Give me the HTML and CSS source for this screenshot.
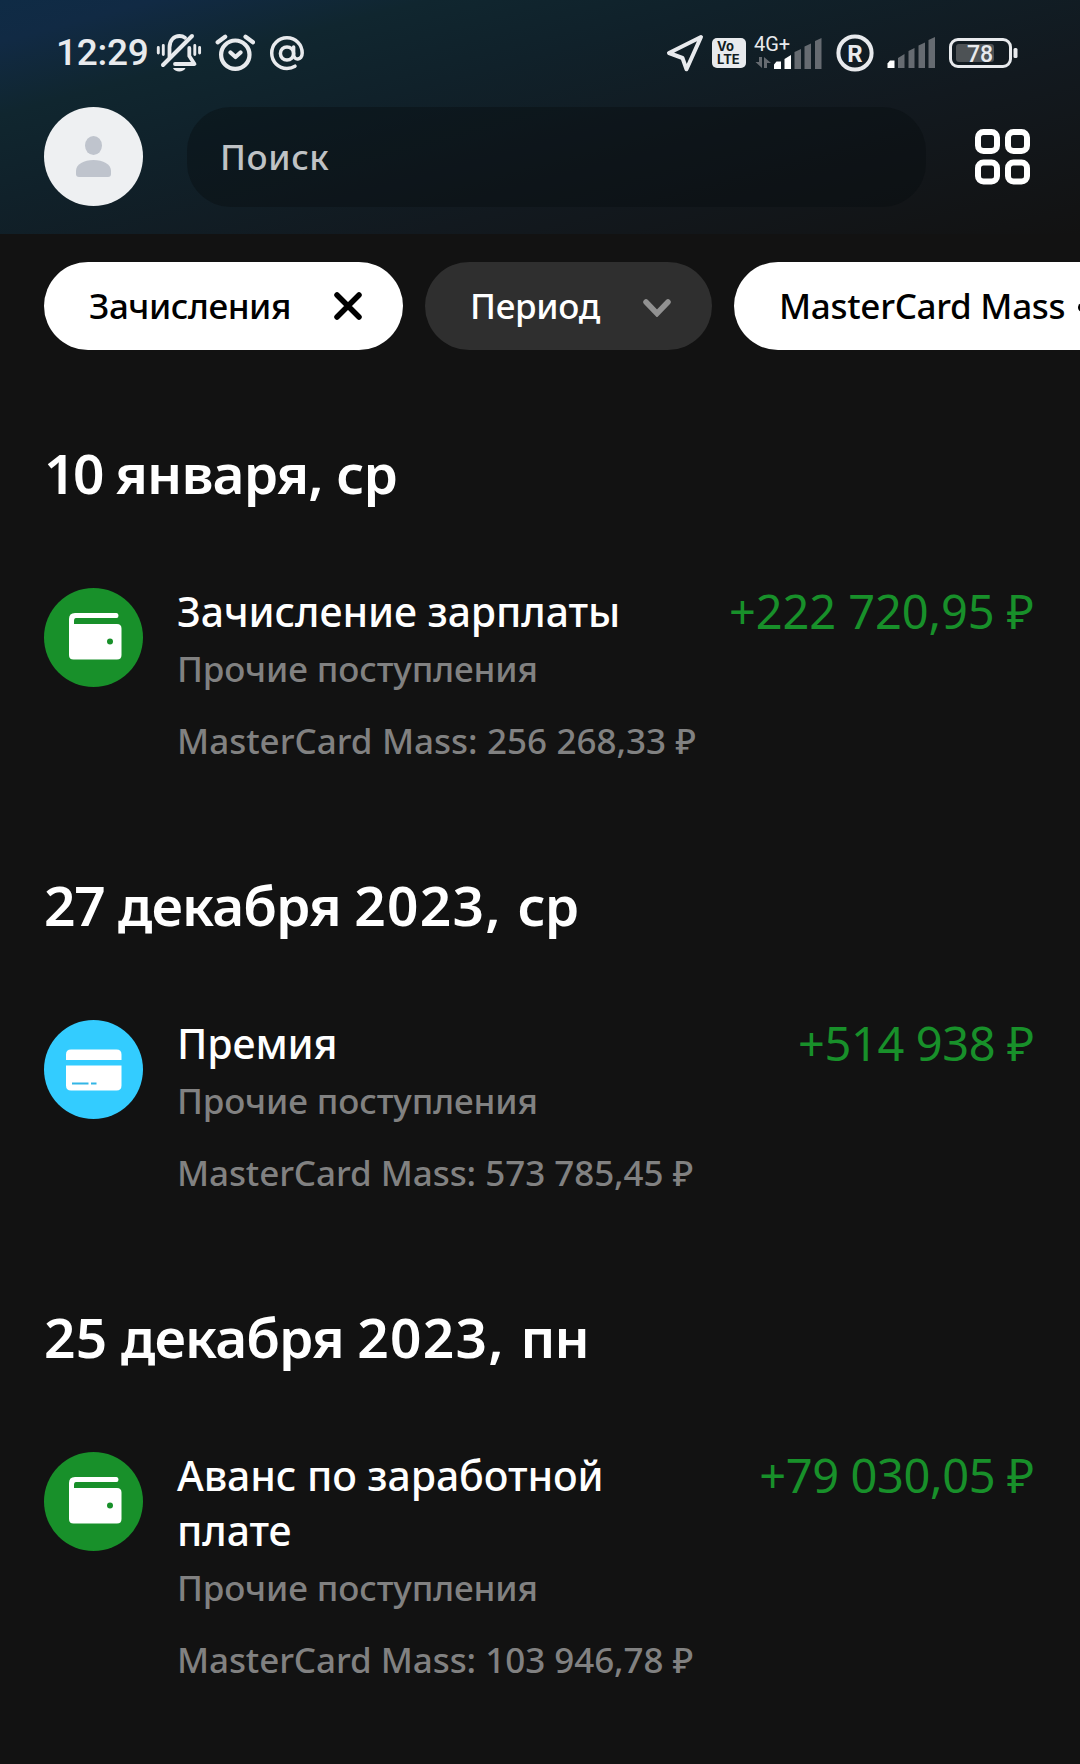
FILE: index.html
```html
<!DOCTYPE html>
<html lang="ru">
<head>
    <meta charset="UTF-8">
    <meta name="viewport" content="width=device-width, initial-scale=1.0">
    <title>История операций</title>
    <link rel="stylesheet" href="styles.css">
</head>
<body>
    <header class="header">
        <div class="status">
            <span class="time">12:29</span>
            <svg class="st-bell" width="46" height="42" viewBox="156 32 46 42" fill="none" stroke="#e8eaed" stroke-width="3.8" stroke-linecap="round">
                <path d="M158.300 47.500v5.500M163.300 45.500v9M194.800 45.500v9M199.600 47.500v5.500" stroke-width="2.900"/>
                <path d="M169.500 57V47.500c0-7.500 4.500-11.500 10-11.500 2 0 4 .6 5.500 1.800"/>
                <path d="M189.300 48v8l5.200 8H175" stroke-linejoin="round"/>
                <path d="M163 65L192 36" stroke-width="4"/>
                <path d="M173 68h12.500c-1.500 4.500-11 4.500-12.500 0z" fill="#e8eaed" stroke="none"/>
            </svg>
            <svg class="st-alarm" width="40" height="38" viewBox="215 33 40 38" fill="none" stroke="#e8eaed" stroke-width="4.200" stroke-linecap="round" stroke-linejoin="round">
                <circle cx="235.300" cy="53.700" r="14.200"/>
                <path d="M217.700 41.300l7.500-5.600M253 41.300l-7.500-5.600M230.500 51.500l5 4.500 5-4.500"/>
            </svg>
            <svg class="st-at" width="36" height="36" viewBox="269 34 36 36" fill="none" stroke="#e8eaed" stroke-width="3.500" stroke-linecap="round">
                <circle cx="287" cy="52.500" r="6.600"/>
                <path d="M293.600 46v7.500c0 6.500 8.600 6 8.600-1.500 0-8.500-6.600-15.300-15.200-15.300S271.700 43.500 271.700 52c0 8.600 6.700 15.400 15.300 15.400 3 0 5.500-.7 8-2.200"/>
            </svg>
            <svg class="st-geo" width="40" height="40" viewBox="665 33 40 40" fill="none" stroke="#e8eaed" stroke-width="4" stroke-linejoin="round">
                <path d="M701 37L669 53l13.500 5 4 11.300z"/>
            </svg>
            <div class="volte"><span>Vo</span><span>LTE</span></div>
            <svg class="st-net" width="70" height="44" viewBox="754.500 30 70 44">
                <text x="754.500" y="49.500" class="net-label">4G+</text>
                <g fill="#666b71">
                    <path d="M759.500 56h3v11l-6.500-6h3.500zM764.500 67h3v-5h4l-7-6z"/>
                    <path d="M795 51l6.500-3v20h-6.500zM805 45.500l6.500-3V68H805zM815.500 40l6.500-3v31h-6.500z"/>
                </g>
                <path d="M774.500 63.500l2.500-3h4.500V68h-7zM785 58l6.500-4v14H785z" fill="#fff"/>
            </svg>
            <svg class="st-roam" width="38" height="38" viewBox="836 33.500 38 38">
                <circle cx="855" cy="52.500" r="16.600" fill="none" stroke="#e8eaed" stroke-width="4"/>
                <text x="855" y="61" class="roam-label">R</text>
            </svg>
            <svg class="st-sim" width="49" height="32" viewBox="887 37 49 32" fill="#666b71">
                <path d="M898 58l6.500-4v14H898zM908.500 51l6-3v20h-6zM918.500 45.500l6.500-3V68h-6.500zM928.500 40l6.500-3v31h-6.500z"/>
                <path d="M887.500 63.500l2.500-3h4.500V68h-7z" fill="#fff"/>
            </svg>
            <svg class="st-batt" width="72" height="32" viewBox="948 36 72 32">
                <rect x="950.500" y="38.500" width="60" height="27" rx="7.500" fill="none" stroke="#e8eaed" stroke-width="3"/>
                <rect x="956" y="43" width="38" height="18" rx="3" fill="#4d5255"/>
                <rect x="1013.500" y="47" width="4" height="10" rx="1.500" fill="#e8eaed"/>
                <text x="980" y="60.500" class="batt-label">78</text>
            </svg>
        </div>
        <div class="toolbar">
            <svg class="avatar" width="99" height="99" viewBox="0 0 99 99">
                <circle cx="49.500" cy="49.500" r="49.500" fill="#eef0f2"/>
                <ellipse cx="49.500" cy="38.500" rx="8.500" ry="9.500" fill="#bfc4cd"/>
                <path d="M32 64c0-7 8-11 17.500-11S67 57 67 64v3q0 3-3 3H35q-3 0-3-3z" fill="#bfc4cd"/>
            </svg>
            <div class="search">Поиск</div>
            <svg class="grid-icon" width="58" height="58" viewBox="0 0 58 58" fill="none" stroke="#fff" stroke-width="6">
                <rect x="4" y="4" width="19" height="19" rx="5.500"/>
                <rect x="34" y="4" width="19" height="19" rx="5.500"/>
                <rect x="4" y="34.500" width="19" height="19" rx="5.500"/>
                <rect x="34" y="34.500" width="19" height="19" rx="5.500"/>
            </svg>
        </div>
    </header>

    <div class="chips">
        <div class="chip chip-income">
            <span>Зачисления</span>
            <svg width="28" height="28" viewBox="0 0 28 28" stroke="#000" stroke-width="5.500" stroke-linecap="round"><path d="M3 3l22 22M25 3L3 25"/></svg>
        </div>
        <div class="chip chip-period">
            <span>Период</span>
            <svg width="28" height="18" viewBox="0 0 28 18" fill="none" stroke="#919191" stroke-width="5.500" stroke-linecap="round"><path d="M3 3l11 11.500L25 3"/></svg>
        </div>
        <div class="chip chip-card"><span>MasterCard Mass</span><i class="dot"></i></div>
    </div>

    <main class="history">
        <section class="day">
            <h2><span class="n10">10</span> января, ср</h2>
            <div class="item">
                <svg class="icon" width="99" height="99" viewBox="0 0 99 99">
                    <circle cx="49.500" cy="49.500" r="49.500" fill="#18902a"/>
                    <path d="M31 25h41.500q2 0 2 2.500t-2 2.500H32q-2 0-2 3v3h43q4.500 0 4.500 4.500V67q0 4.500-4.500 4.500H29.500Q25 71.500 25 67V31q0-6 6-6z" fill="#fff"/>
                    <circle cx="66" cy="53.500" r="3" fill="#18902a"/>
                </svg>
                <div class="info">
                    <div class="title">Зачисление зарплаты</div>
                    <div class="category">Прочие поступления</div>
                    <div class="balance wide">MasterCard Mass: 256 268,33 ₽</div>
                </div>
                <div class="amount wide">+222 720,95 ₽</div>
            </div>
        </section>

        <section class="day">
            <h2><span class="n27">27</span> декабря <span class="year">2023, </span>ср</h2>
            <div class="item">
                <svg class="icon" width="99" height="99" viewBox="0 0 99 99">
                    <circle cx="49.500" cy="49.500" r="49.500" fill="#33ccff"/>
                    <path d="M22 40v-5.500q0-5 5-5h45.500q5 0 5 5V40zM22 45.500h55.500v20q0 5-5 5H27q-5 0-5-5z" fill="#fff"/>
                    <path d="M28 63.500h16.500M47 63.500h5.500" stroke="#33b6e6" stroke-width="2"/>
                </svg>
                <div class="info">
                    <div class="title">Премия</div>
                    <div class="category">Прочие поступления</div>
                    <div class="balance">MasterCard Mass: 573 785,45 ₽</div>
                </div>
                <div class="amount">+514 938 ₽</div>
            </div>
        </section>

        <section class="day">
            <h2><span class="n25">25</span> декабря <span class="year">2023, </span>пн</h2>
            <div class="item">
                <svg class="icon" width="99" height="99" viewBox="0 0 99 99">
                    <circle cx="49.500" cy="49.500" r="49.500" fill="#18902a"/>
                    <path d="M31 25h41.500q2 0 2 2.500t-2 2.500H32q-2 0-2 3v3h43q4.500 0 4.500 4.500V67q0 4.500-4.500 4.500H29.500Q25 71.500 25 67V31q0-6 6-6z" fill="#fff"/>
                    <circle cx="66" cy="53.500" r="3" fill="#18902a"/>
                </svg>
                <div class="info">
                    <div class="title">Аванс по заработной<br>плате</div>
                    <div class="category">Прочие поступления</div>
                    <div class="balance">MasterCard Mass: 103 946,78 ₽</div>
                </div>
                <div class="amount">+79 030,05 ₽</div>
            </div>
        </section>
    </main>
</body>
</html>
```
FILE: styles.css
```css
* {
    box-sizing: border-box;
}
body {
    margin: 0;
    width: 1080px;
    height: 1764px;
    overflow: hidden;
    background: #121212;
    color: #fff;
    font-family: "Noto Sans", "Open Sans", sans-serif;
    font-weight: 500;
}
svg {
    display: block;
    flex: none;
}
.header {
    height: 234px;
    background: linear-gradient(165deg, #0f2b45 0%, #112a44 8%, #10262f 22%, #10212a 38%, #12191f 66%, #121212 100%);
}

/* status bar */
.status {
    display: flex;
    align-items: center;
    height: 107px;
    padding: 0 0 1px 56px;
    color: #e8eaed;
}
.time {
    width: 100px;
    font: 500 37px/44px Roboto, sans-serif;
    letter-spacing: -0.3px;
    white-space: nowrap;
}
.st-alarm {
    margin-left: 13px;
}
.st-at {
    margin-left: 14px;
}
.st-geo {
    margin-left: 360px;
}
.volte {
    flex: none;
    width: 34px;
    height: 30px;
    margin-left: 7px;
    padding: 2px 0 0 5px;
    border-radius: 5px;
    background: #e8eaed;
    color: #121c22;
    font: 700 13px/13px Inter, sans-serif;
}
.volte span {
    display: block;
}
.st-net {
    margin-left: 8px;
}
.net-label {
    font: 400 20px Roboto, sans-serif;
    fill: #e8eaed;
}
.st-roam {
    margin-left: 12px;
}
.roam-label {
    font: 700 24px Roboto, sans-serif;
    text-anchor: middle;
    fill: #e8eaed;
}
.st-sim {
    margin-left: 13px;
}
.st-batt {
    margin-left: 12px;
}
.batt-label {
    font: 500 23px Roboto, sans-serif;
    text-anchor: middle;
    fill: #e8eaed;
}

/* avatar + search */
.toolbar {
    display: flex;
    align-items: center;
    height: 100px;
    padding-left: 44px;
}
.avatar {
    align-self: flex-start;
}
.search {
    width: 739px;
    height: 100px;
    margin-left: 44px;
    padding-left: 33px;
    border-radius: 44px;
    background: rgba(8, 12, 14, 0.4);
    color: #bfc2c5;
    font-size: 35px;
    line-height: 100px;
    letter-spacing: 0.6px;
}
.grid-icon {
    margin-left: 48px;
}

/* filters */
.chips {
    display: flex;
    gap: 22px;
    margin-top: 28px;
    padding-left: 44px;
    overflow: hidden;
}
.chip {
    display: flex;
    flex: none;
    align-items: center;
    justify-content: space-between;
    height: 88px;
    padding: 0 41px 0 45px;
    border-radius: 44px;
    background: #fff;
    color: #000;
    font-size: 35px;
    line-height: 88px;
    letter-spacing: -0.3px;
    white-space: nowrap;
}
.chip-income {
    width: 359px;
    letter-spacing: -0.45px;
}
.chip-period {
    width: 287px;
    background: #2f2f2f;
    color: #fff;
}
.chip-period svg {
    margin-top: 3px;
}
.chip-card {
    flex: 1;
    padding-right: 0;
    justify-content: flex-start;
    border-radius: 44px 0 0 44px;
}
/* cut by the screen edge, like the rest of the chip */
.dot {
    flex: none;
    width: 9px;
    height: 9px;
    margin: 2px 0 0 13px;
    border-radius: 50%;
    background: #000;
}

/* operations */
.history {
    padding: 91px 46px 0 44px;
}
.day {
    margin-bottom: 108px;
}
.day h2 {
    margin: 0 0 79px;
    font-size: 55px;
    font-weight: 600;
    line-height: 64px;
    letter-spacing: -0.9px;
    white-space: nowrap;
}
.n10 {
    letter-spacing: -2.5px;
}
.n27 {
    letter-spacing: -1.2px;
}
.n25 {
    letter-spacing: 0.3px;
}
.year {
    letter-spacing: 1.3px;
}
.item {
    display: flex;
    align-items: flex-start;
}
.icon {
    margin-top: 4px;
}
.info {
    flex: 1;
    margin-left: 34px;
    white-space: nowrap;
}
.title {
    font-size: 41px;
    line-height: 55px;
    letter-spacing: -0.1px;
}
.category,
.balance {
    color: #818181;
    font-size: 35px;
    line-height: 48px;
    letter-spacing: -0.1px;
}
.category {
    margin-top: 6px;
}
.balance {
    margin-top: 24px;
    word-spacing: 0.3px;
}
.balance.wide {
    letter-spacing: 0;
}
.amount {
    margin-top: -5px;
    color: #18902a;
    font-size: 47px;
    font-weight: 400;
    line-height: 64px;
    letter-spacing: -0.4px;
    white-space: nowrap;
}
.amount.wide {
    letter-spacing: -0.1px;
}
```
